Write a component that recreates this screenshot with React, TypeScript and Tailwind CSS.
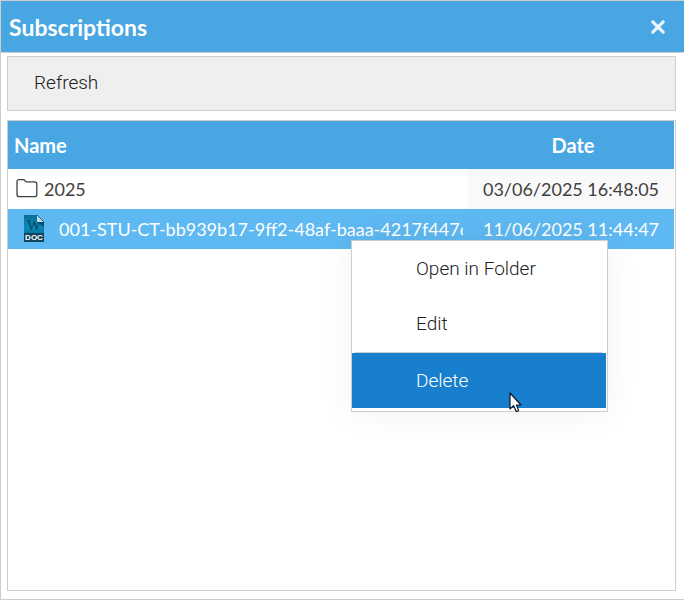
import type { ReactNode } from "react";

function CloseIcon() {
  return (
    <svg width="16" height="16" viewBox="0 0 16 16" aria-hidden="true">
      <path d="M2.8 2.8 L13.2 13.2 M13.2 2.8 L2.8 13.2" stroke="#e9f4fc" strokeWidth="3.2" strokeLinecap="round" />
    </svg>
  );
}

function FolderIcon() {
  return (
    <svg className="shrink-0" width="22" height="20" viewBox="0 0 22 20" fill="none" aria-hidden="true">
      <path
        d="M1 2.5 C1 1.2 1.6 .7 3 .7 H7.2 C8.2 .7 8.6 1 9 1.6 L9.6 2.4 C9.8 2.7 10 2.9 10.6 2.9 H18.5 C20 2.9 20.8 3.8 20.8 5.3 V15.5 C20.8 17 20 17.7 18.5 17.7 H3.2 C1.7 17.7 1 17 1 15.5 Z"
        stroke="#404040"
        strokeWidth="1.3"
      />
    </svg>
  );
}

function DocIcon() {
  return (
    <svg className="shrink-0" width="20" height="28" viewBox="0 0 20 28" aria-hidden="true">
      <defs>
        <linearGradient id="page" x1="0" y1="0" x2="0" y2="1">
          <stop offset="0" stopColor="#0a6f98" />
          <stop offset="0.45" stopColor="#0989b8" />
          <stop offset="0.7" stopColor="#0775a0" />
          <stop offset="1" stopColor="#0c4359" />
        </linearGradient>
      </defs>
      <path d="M0 0 H13 L20 7 V27 H0 Z" fill="url(#page)" />
      <path d="M13 7 H20 V12 Z" fill="#07506d" />
      <text x="10" y="15" textAnchor="middle" fontFamily="Liberation Serif, serif" fontWeight="400" fontSize="15" fill="#07445e">
        W
      </text>
      <path d="M13 0 L20 7 H14 Q13 7 13 6 Z" fill="#c9dde6" />
      <path d="M13 0 L20 7" stroke="#245e78" strokeWidth="1" />
      <rect y="18" width="20" height="9" fill="#11465a" />
      <text x="10" y="25" textAnchor="middle" fontFamily="Liberation Sans, sans-serif" fontWeight="700" fontSize="8" fill="#fff">
        DOC
      </text>
    </svg>
  );
}

function Pointer() {
  return (
    <svg className="pointer-events-none absolute top-[151px] left-[157px]" width="13" height="21" viewBox="0 0 13 21" aria-hidden="true">
      <path
        d="M1 1 V17 L4.6 13.6 L7 19 Q8 20 9.6 18.6 L7.5 13 H12 Z"
        fill="#fff"
        stroke="#101428"
        strokeWidth="1.2"
        strokeLinejoin="round"
      />
    </svg>
  );
}

function MenuItem({ children, active = false }: { children: ReactNode; active?: boolean }) {
  return (
    <button
      type="button"
      role="menuitem"
      className={
        active
          ? "block h-[55px] w-full bg-[#177fcd] pl-16 text-left text-white"
          : "block h-[55px] w-full pl-16 text-left text-[#222]"
      }
    >
      {children}
    </button>
  );
}

export default function App() {
  return (
    <main className="relative flex min-h-screen flex-col overflow-hidden border-y border-l border-[#cdcdcd] bg-white font-['Lato',sans-serif] text-[18px] leading-6">
      <header className="flex h-[52px] items-center justify-between border-b border-[#cdcdcd] bg-[#48a6e3] pr-[18px] pl-2 text-white">
        <h1 className="text-[23px] font-bold">Subscriptions</h1>
        <button type="button" aria-label="Close">
          <CloseIcon />
        </button>
      </header>

      <div className="flex flex-1 flex-col gap-[9px] pt-[3px] pr-2 pb-2 pl-1.5">
        <div className="flex h-[55px] border border-[#cdcdcd] bg-[#efefef] font-['Roboto',sans-serif] text-[19px] font-light">
          <button type="button" className="px-[26px] pb-0.5 text-[#222]">
            Refresh
          </button>
        </div>

        <div className="flex-1 border border-[#cdcdcd] pr-px">
          <table className="w-full table-fixed border-collapse">
            <thead>
              <tr className="h-12 bg-[#48a6e3] text-[20px] text-white">
                <th className="px-1.5 text-left font-bold">Name</th>
                <th className="w-[206px] pl-1 text-center font-bold">Date</th>
              </tr>
            </thead>
            <tbody>
              <tr className="h-10 text-[#404040]">
                <td className="pr-1 pl-2">
                  <div className="flex items-center gap-1.5">
                    <FolderIcon />
                    <span>2025</span>
                  </div>
                </td>
                <td className="bg-[#f9f9f9] text-center whitespace-nowrap">03/06/2025 16:48:05</td>
              </tr>
              <tr className="h-10 bg-[#5eb8f1] text-white">
                <td className="pr-[5px] pl-4">
                  <div className="flex items-center gap-[15px] overflow-hidden">
                    <DocIcon />
                    <span className="min-w-0 overflow-hidden whitespace-nowrap">
                      001-STU-CT-bb939b17-9ff2-48af-baaa-4217f447c
                    </span>
                  </div>
                </td>
                <td className="text-center whitespace-nowrap">11/06/2025 11:44:47</td>
              </tr>
            </tbody>
          </table>
        </div>
      </div>

      <div
        role="menu"
        className="absolute top-[239px] left-[350px] w-[257px] border border-[#cdcdcd] bg-white pr-px pb-[3px] font-['Roboto',sans-serif] text-[19px] font-light shadow-[0_0_32px_rgba(0,0,0,0.06)]"
      >
        <MenuItem>Open in Folder</MenuItem>
        <MenuItem>Edit</MenuItem>
        <hr className="mt-px mr-1 ml-[3px] border-[#cdcdcd]" />
        <MenuItem active>Delete</MenuItem>
        <Pointer />
      </div>
    </main>
  );
}
